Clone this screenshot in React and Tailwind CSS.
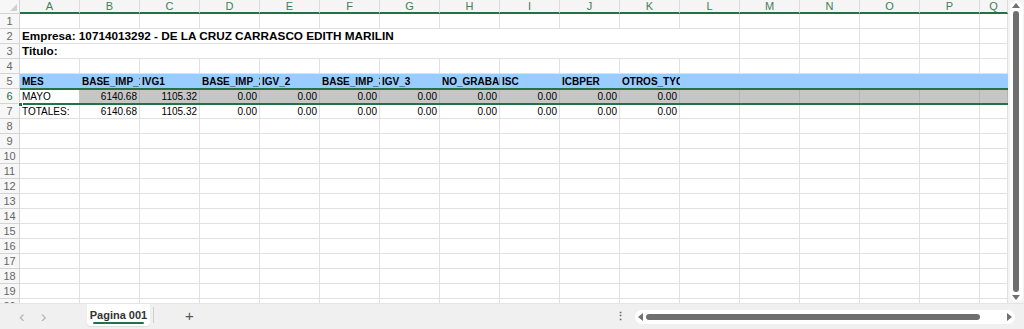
import React from "react";

const COLS = ["A", "B", "C", "D", "E", "F", "G", "H", "I", "J", "K", "L", "M", "N", "O", "P", "Q"];
const colW = (i) => (i === 16 ? "w-[28px]" : "w-[60px]");

const HEAD = ["MES", "BASE_IMP_1", "IVG1", "BASE_IMP_2", "IGV_2", "BASE_IMP_3", "IGV_3", "NO_GRABADO", "ISC", "ICBPER", "OTROS_TYC"];
const MAYO = ["MAYO", "6140.68", "1105.32", "0.00", "0.00", "0.00", "0.00", "0.00", "0.00", "0.00", "0.00"];
const TOTAL = ["TOTALES:", "6140.68", "1105.32", "0.00", "0.00", "0.00", "0.00", "0.00", "0.00", "0.00", "0.00"];

function RowLabel({ n, active }) {
  return (
    <div
      className={`w-[20px] shrink-0 h-full flex items-center justify-center border-r border-b border-[#d4d4d4] bg-[#f7f7f7] text-[11px] ${
        active ? "text-[#217346]" : "text-[#666]"
      }`}
    >
      {n}
    </div>
  );
}

function Row({ n, children }) {
  return (
    <div className="flex h-[15px] shrink-0">
      <RowLabel n={n} />
      {children}
    </div>
  );
}

function EmptyCells({ from = 0 }) {
  return COLS.slice(from).map((c, i) => (
    <div key={c} className={`${colW(from + i)} shrink-0 h-full border-r border-b border-[#e1e1e1]`} />
  ));
}

function DataRow({ n, values }) {
  return (
    <Row n={n}>
      {COLS.map((c, i) => {
        const v = values[i];
        const num = i > 0 && v !== undefined;
        return (
          <div
            key={c}
            className={`${colW(i)} shrink-0 h-full border-r border-b border-[#e1e1e1] px-[2px] flex items-center overflow-hidden whitespace-nowrap text-[10px] text-black ${
              num ? "justify-end" : "justify-start"
            }`}
          >
            {v}
          </div>
        );
      })}
    </Row>
  );
}

export default function App() {
  const empties = [8, 9, 10, 11, 12, 13, 14, 15, 16, 17, 18, 19, 20];
  return (
    <div
      className="w-[1024px] h-[329px] bg-white overflow-hidden flex flex-col"
      style={{ fontFamily: '"Liberation Sans", Arial, sans-serif' }}
    >
      <div className="flex h-[303px] overflow-hidden">
        {/* grid */}
        <div className="w-[1008px] flex flex-col overflow-hidden">
          {/* column headers */}
          <div className="flex h-[14px] shrink-0">
            <div className="w-[20px] shrink-0 h-full bg-[#f7f7f7] border-r border-b border-[#d4d4d4] relative">
              <div className="absolute right-[2px] bottom-[2px] w-0 h-0 border-l-[7px] border-l-transparent border-b-[7px] border-b-[#d0d0d0]" />
            </div>
            {COLS.map((c, i) => (
              <div
                key={c}
                className={`${colW(i)} shrink-0 h-full bg-[#f5f5f5] border-r border-[#dcdcdc] border-b-2 border-b-[#217346] flex items-center justify-center text-[11px] text-[#3f8058] overflow-hidden`}
              >
                {c}
              </div>
            ))}
          </div>

          <Row n={1}>
            <EmptyCells />
          </Row>

          <Row n={2}>
            <div className="w-[720px] shrink-0 h-full border-r border-b border-[#e1e1e1] px-[2px] flex items-center text-[11.75px] font-bold text-black whitespace-nowrap">
              Empresa: 10714013292 - DE LA CRUZ CARRASCO EDITH MARILIN
            </div>
            <EmptyCells from={12} />
          </Row>

          <Row n={3}>
            <div className="w-[720px] shrink-0 h-full border-r border-b border-[#e1e1e1] px-[2px] flex items-center text-[11.75px] font-bold text-black whitespace-nowrap">
              Titulo:
            </div>
            <EmptyCells from={12} />
          </Row>

          <Row n={4}>
            <EmptyCells />
          </Row>

          <Row n={5}>
            {COLS.map((c, i) => (
              <div
                key={c}
                className={`${colW(i)} shrink-0 h-full bg-[#99ccff] border-b border-[#e1e1e1] px-[2px] flex items-center overflow-hidden whitespace-nowrap text-[10px] font-bold text-black`}
              >
                {HEAD[i]}
              </div>
            ))}
          </Row>

          {/* selected row 6 */}
          <div className="flex h-[15px] shrink-0">
            <RowLabel n={6} active />
            <div className="flex relative">
              {COLS.map((c, i) => (
                <div
                  key={c}
                  className={`${colW(i)} shrink-0 h-full border-r px-[2px] flex items-center overflow-hidden whitespace-nowrap text-[10px] text-black ${
                    i === 0 ? "bg-white justify-start border-[#c6c6c6]" : "bg-[#c6c6c6] justify-end border-[#b4b4b4]"
                  }`}
                >
                  {MAYO[i]}
                </div>
              ))}
              <div className="absolute left-0 right-0 -top-[1px] -bottom-[1px] border-y-2 border-[#217346] pointer-events-none" />
              <div className="absolute left-[-2px] -bottom-[3px] w-[5px] h-[5px] bg-[#217346] border border-white" />
            </div>
          </div>

          <DataRow n={7} values={TOTAL} />

          {empties.map((n) => (
            <Row key={n} n={n}>
              <EmptyCells />
            </Row>
          ))}
        </div>

        {/* vertical scrollbar */}
        <div className="w-[16px] shrink-0 bg-[#f3f3f3] flex justify-center py-[1px]">
          <div className="w-[13px] h-full bg-white rounded-full flex flex-col items-center pt-[2px] pb-[2px]">
            <div className="w-0 h-0 border-l-[4px] border-l-transparent border-r-[4px] border-r-transparent border-b-[5px] border-b-[#707070]" />
            <div className="mt-[3px] w-[6px] flex-1 bg-[#6f6f6f] rounded-full" />
            <div className="mt-[3px] w-0 h-0 border-l-[4px] border-l-transparent border-r-[4px] border-r-transparent border-t-[5px] border-t-[#707070]" />
          </div>
        </div>
      </div>

      {/* bottom sheet bar */}
      <div className="flex-1 bg-[#f0f0f0] flex items-start text-[#b5b5b5] border-t border-[#e4e4e4]">
        <div className="w-[87px] h-[24px] flex items-center pl-[19px] gap-[16px] text-[17px] leading-none">
          <span>&lsaquo;</span>
          <span>&rsaquo;</span>
        </div>
        <div className="w-[63px] h-[22px] bg-white rounded-b-[4px] flex flex-col items-center justify-center shadow-[0_1px_1px_rgba(0,0,0,0.08)]">
          <span className="text-[11px] font-bold text-[#333] leading-[12px] mt-[3px]">Pagina 001</span>
          <span className="mt-[1px] w-[51px] h-[2px] bg-[#217346] rounded" />
        </div>
        <div className="ml-[3px] mt-[3px] w-px h-[16px] bg-[#d0d0d0]" />
        <div className="ml-[31px] h-[24px] flex items-center text-[15px] text-[#555] font-light">+</div>
        <div className="ml-[421px] h-[24px] flex items-center text-[11px] text-[#666] font-bold">&#8942;</div>
        <div className="ml-[9px] mt-[6px] w-[380px] h-[14px] bg-white rounded-full flex items-center px-[3px] gap-[3px]">
          <div className="w-0 h-0 border-t-[4px] border-t-transparent border-b-[4px] border-b-transparent border-r-[5px] border-r-[#707070]" />
          <div className="w-[334px] h-[6px] bg-[#6f6f6f] rounded-full" />
          <div className="flex-1" />
          <div className="w-0 h-0 border-t-[4px] border-t-transparent border-b-[4px] border-b-transparent border-l-[5px] border-l-[#707070]" />
        </div>
      </div>
    </div>
  );
}
